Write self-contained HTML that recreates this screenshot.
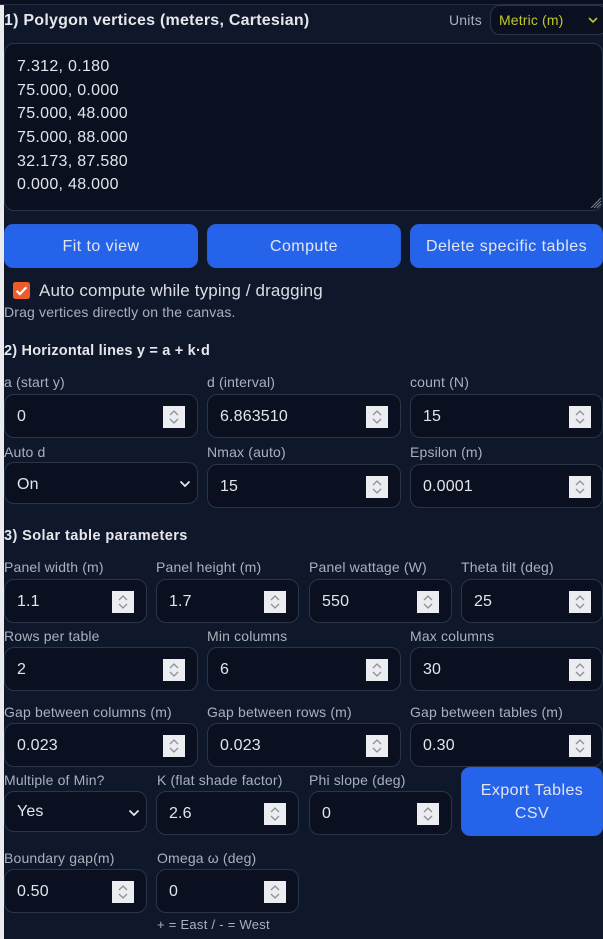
<!DOCTYPE html>
<html><head><meta charset="utf-8">
<style>
html,body{margin:0;padding:0;width:603px;height:939px;overflow:hidden;background:#0f172a;}
body{position:relative;font-family:"Liberation Sans","DejaVu Sans",sans-serif;color:#e5e7eb;}
.a{position:absolute;white-space:nowrap;}
.h{font-weight:700;color:#e5e7eb;}
.l{font-size:14px;line-height:16px;color:#a9b1bd;height:16px;letter-spacing:.16px;}
.i{position:absolute;box-sizing:border-box;background:#0b1020;border:1px solid #2a3547;border-radius:10px;font-size:16px;color:#e2e5ea;padding-left:12px;white-space:nowrap;letter-spacing:.15px;}
.n{height:44px;line-height:43px;}
.s{height:42px;line-height:43px;}
.sp{position:absolute;right:12px;top:11px;width:22px;height:22px;display:block;}
.e .sp{right:11px;}
.c{position:absolute;right:6px;top:17px;width:12px;height:8px;display:block;}
.b{position:absolute;box-sizing:border-box;background:#2563eb;border:1px solid #2a5fd6;border-radius:9px;color:#e2e6ee;font-size:16px;line-height:23px;text-align:center;display:flex;align-items:center;justify-content:center;letter-spacing:.45px;}
</style></head>
<body>
<div class="a" style="left:0;top:5px;width:4px;height:934px;background:#e9ebef"></div>
<div class="a" style="left:0;top:0;width:603px;height:4px;background:#0a1020"></div>
<div class="a" style="left:0;top:4px;width:603px;height:1px;background:#253044"></div>

<div class="a h" style="left:4px;top:12px;font-size:16px;line-height:18px;letter-spacing:.24px">1) Polygon vertices (meters, Cartesian)</div>
<div class="a" style="left:449px;top:12px;font-size:14px;line-height:16px;color:#a9b1bd;letter-spacing:.2px">Units</div>
<div class="i" style="left:490px;top:5px;width:118px;height:30px;line-height:28px;font-size:14px;color:#c2c62e;padding-left:8px;background:#0b1020">Metric (m)<svg style="position:absolute;left:97px;top:11px" width="10" height="7" viewBox="0 0 10 7"><path d="M1 1l4 4 4-4" fill="none" stroke="#c2c62e" stroke-width="1.6"/></svg></div>

<div class="i" style="left:4px;top:43px;width:599px;height:168px;font-size:16px;line-height:23.6px;padding:11px 0 0 12px;background:#0b1020;white-space:normal;letter-spacing:.3px">
<div class="a" style="left:12px;top:11px;line-height:24px">7.312, 0.180</div>
<div class="a" style="left:12px;top:35px;line-height:24px">75.000, 0.000</div>
<div class="a" style="left:12px;top:58px;line-height:24px">75.000, 48.000</div>
<div class="a" style="left:12px;top:82px;line-height:24px">75.000, 88.000</div>
<div class="a" style="left:12px;top:106px;line-height:24px">32.173, 87.580</div>
<div class="a" style="left:12px;top:129px;line-height:24px">0.000, 48.000</div>
</div>
<svg class="a" style="left:590px;top:197px" width="12" height="12" viewBox="0 0 12 12"><path d="M11 1L1 11M11 4L4 11M11 7L7 11" stroke="#7b8494" stroke-width="1"/></svg>

<div class="b" style="left:4px;top:224px;width:194px;height:44px">Fit to view</div>
<div class="b" style="left:207px;top:224px;width:194px;height:44px">Compute</div>
<div class="b" style="left:410px;top:224px;width:193px;height:44px;white-space:nowrap">Delete specific tables</div>

<svg class="a" style="left:13px;top:282px" width="17" height="17" viewBox="0 0 17 17"><rect width="17" height="17" rx="2.5" fill="#ee5a2a"/><path d="M3.6 8.8l3.3 3.3 6.4-6.8" fill="none" stroke="#fff" stroke-width="2.2"/></svg>
<div class="a" style="left:39px;top:281px;font-size:17px;line-height:19px;color:#d9dde3;letter-spacing:.14px">Auto compute while typing / dragging</div>
<div class="a l" style="left:4px;top:304px;">Drag vertices directly on the canvas.</div>

<div class="a h" style="left:4px;top:343px;font-size:14.5px;line-height:16px;letter-spacing:.2px">2) Horizontal lines y = a + k·d</div>

<div class="a l" style="left:4px;top:374px">a (start y)</div>
<div class="a l" style="left:207px;top:374px">d (interval)</div>
<div class="a l" style="left:410px;top:374px">count (N)</div>
<div class="i n" style="left:4px;top:394px;width:194px">0<svg class="sp" viewBox="0 0 22 22"><rect width="22" height="22" fill="#ecedf1"/><path d="M7 9l4-4 4 4M7 13l4 4 4-4" fill="none" stroke="#8d9096" stroke-width="1.3"/></svg></div>
<div class="i n" style="left:207px;top:394px;width:194px">6.863510<svg class="sp" viewBox="0 0 22 22"><rect width="22" height="22" fill="#ecedf1"/><path d="M7 9l4-4 4 4M7 13l4 4 4-4" fill="none" stroke="#8d9096" stroke-width="1.3"/></svg></div>
<div class="i n e" style="left:410px;top:394px;width:193px">15<svg class="sp" viewBox="0 0 22 22"><rect width="22" height="22" fill="#ecedf1"/><path d="M7 9l4-4 4 4M7 13l4 4 4-4" fill="none" stroke="#8d9096" stroke-width="1.3"/></svg></div>

<div class="a l" style="left:4px;top:444px">Auto d</div>
<div class="a l" style="left:207px;top:444px">Nmax (auto)</div>
<div class="a l" style="left:410px;top:444px">Epsilon (m)</div>
<div class="i s" style="left:4px;top:462px;width:194px">On<svg class="c" viewBox="0 0 12 8"><path d="M1.5 1.5L6 6l4.5-4.5" fill="none" stroke="#e5e7eb" stroke-width="1.7"/></svg></div>
<div class="i n" style="left:207px;top:464px;width:194px">15<svg class="sp" viewBox="0 0 22 22"><rect width="22" height="22" fill="#ecedf1"/><path d="M7 9l4-4 4 4M7 13l4 4 4-4" fill="none" stroke="#8d9096" stroke-width="1.3"/></svg></div>
<div class="i n e" style="left:410px;top:464px;width:193px">0.0001<svg class="sp" viewBox="0 0 22 22"><rect width="22" height="22" fill="#ecedf1"/><path d="M7 9l4-4 4 4M7 13l4 4 4-4" fill="none" stroke="#8d9096" stroke-width="1.3"/></svg></div>

<div class="a h" style="left:4px;top:528px;font-size:14.5px;line-height:16px;letter-spacing:.42px">3) Solar table parameters</div>

<div class="a l" style="left:4px;top:559px">Panel width (m)</div>
<div class="a l" style="left:156px;top:559px">Panel height (m)</div>
<div class="a l" style="left:309px;top:559px">Panel wattage (W)</div>
<div class="a l" style="left:461px;top:559px">Theta tilt (deg)</div>
<div class="i n" style="left:4px;top:579px;width:143px">1.1<svg class="sp" viewBox="0 0 22 22"><rect width="22" height="22" fill="#ecedf1"/><path d="M7 9l4-4 4 4M7 13l4 4 4-4" fill="none" stroke="#8d9096" stroke-width="1.3"/></svg></div>
<div class="i n" style="left:156px;top:579px;width:143px">1.7<svg class="sp" viewBox="0 0 22 22"><rect width="22" height="22" fill="#ecedf1"/><path d="M7 9l4-4 4 4M7 13l4 4 4-4" fill="none" stroke="#8d9096" stroke-width="1.3"/></svg></div>
<div class="i n" style="left:309px;top:579px;width:143px">550<svg class="sp" viewBox="0 0 22 22"><rect width="22" height="22" fill="#ecedf1"/><path d="M7 9l4-4 4 4M7 13l4 4 4-4" fill="none" stroke="#8d9096" stroke-width="1.3"/></svg></div>
<div class="i n e" style="left:461px;top:579px;width:142px">25<svg class="sp" viewBox="0 0 22 22"><rect width="22" height="22" fill="#ecedf1"/><path d="M7 9l4-4 4 4M7 13l4 4 4-4" fill="none" stroke="#8d9096" stroke-width="1.3"/></svg></div>

<div class="a l" style="left:4px;top:628px">Rows per table</div>
<div class="a l" style="left:207px;top:628px">Min columns</div>
<div class="a l" style="left:410px;top:628px">Max columns</div>
<div class="i n" style="left:4px;top:647px;width:194px">2<svg class="sp" viewBox="0 0 22 22"><rect width="22" height="22" fill="#ecedf1"/><path d="M7 9l4-4 4 4M7 13l4 4 4-4" fill="none" stroke="#8d9096" stroke-width="1.3"/></svg></div>
<div class="i n" style="left:207px;top:647px;width:194px">6<svg class="sp" viewBox="0 0 22 22"><rect width="22" height="22" fill="#ecedf1"/><path d="M7 9l4-4 4 4M7 13l4 4 4-4" fill="none" stroke="#8d9096" stroke-width="1.3"/></svg></div>
<div class="i n e" style="left:410px;top:647px;width:193px">30<svg class="sp" viewBox="0 0 22 22"><rect width="22" height="22" fill="#ecedf1"/><path d="M7 9l4-4 4 4M7 13l4 4 4-4" fill="none" stroke="#8d9096" stroke-width="1.3"/></svg></div>

<div class="a l" style="left:4px;top:704px">Gap between columns (m)</div>
<div class="a l" style="left:207px;top:704px">Gap between rows (m)</div>
<div class="a l" style="left:410px;top:704px">Gap between tables (m)</div>
<div class="i n" style="left:4px;top:723px;width:194px">0.023<svg class="sp" viewBox="0 0 22 22"><rect width="22" height="22" fill="#ecedf1"/><path d="M7 9l4-4 4 4M7 13l4 4 4-4" fill="none" stroke="#8d9096" stroke-width="1.3"/></svg></div>
<div class="i n" style="left:207px;top:723px;width:194px">0.023<svg class="sp" viewBox="0 0 22 22"><rect width="22" height="22" fill="#ecedf1"/><path d="M7 9l4-4 4 4M7 13l4 4 4-4" fill="none" stroke="#8d9096" stroke-width="1.3"/></svg></div>
<div class="i n e" style="left:410px;top:723px;width:193px">0.30<svg class="sp" viewBox="0 0 22 22"><rect width="22" height="22" fill="#ecedf1"/><path d="M7 9l4-4 4 4M7 13l4 4 4-4" fill="none" stroke="#8d9096" stroke-width="1.3"/></svg></div>

<div class="a l" style="left:4px;top:772px">Multiple of Min?</div>
<div class="a l" style="left:157px;top:772px">K (flat shade factor)</div>
<div class="a l" style="left:309px;top:772px">Phi slope (deg)</div>
<div class="i s" style="left:4px;top:791px;width:143px;height:41px;line-height:40px">Yes<svg class="c" viewBox="0 0 12 8"><path d="M1.5 1.5L6 6l4.5-4.5" fill="none" stroke="#e5e7eb" stroke-width="1.7"/></svg></div>
<div class="i n" style="left:156px;top:791px;width:143px">2.6<svg class="sp" viewBox="0 0 22 22"><rect width="22" height="22" fill="#ecedf1"/><path d="M7 9l4-4 4 4M7 13l4 4 4-4" fill="none" stroke="#8d9096" stroke-width="1.3"/></svg></div>
<div class="i n" style="left:309px;top:791px;width:143px">0<svg class="sp" viewBox="0 0 22 22"><rect width="22" height="22" fill="#ecedf1"/><path d="M7 9l4-4 4 4M7 13l4 4 4-4" fill="none" stroke="#8d9096" stroke-width="1.3"/></svg></div>
<div class="b" style="left:461px;top:767px;width:142px;height:69px">Export Tables<br>CSV</div>

<div class="a l" style="left:4px;top:850px">Boundary gap(m)</div>
<div class="a l" style="left:157px;top:850px">Omega ω (deg)</div>
<div class="i n" style="left:4px;top:869px;width:143px">0.50<svg class="sp" viewBox="0 0 22 22"><rect width="22" height="22" fill="#ecedf1"/><path d="M7 9l4-4 4 4M7 13l4 4 4-4" fill="none" stroke="#8d9096" stroke-width="1.3"/></svg></div>
<div class="i n" style="left:156px;top:869px;width:143px">0<svg class="sp" viewBox="0 0 22 22"><rect width="22" height="22" fill="#ecedf1"/><path d="M7 9l4-4 4 4M7 13l4 4 4-4" fill="none" stroke="#8d9096" stroke-width="1.3"/></svg></div>
<div class="a" style="left:157px;top:917px;font-size:13px;line-height:15px;color:#a9b1bd;letter-spacing:.27px">+ = East / - = West</div>
</body></html>
